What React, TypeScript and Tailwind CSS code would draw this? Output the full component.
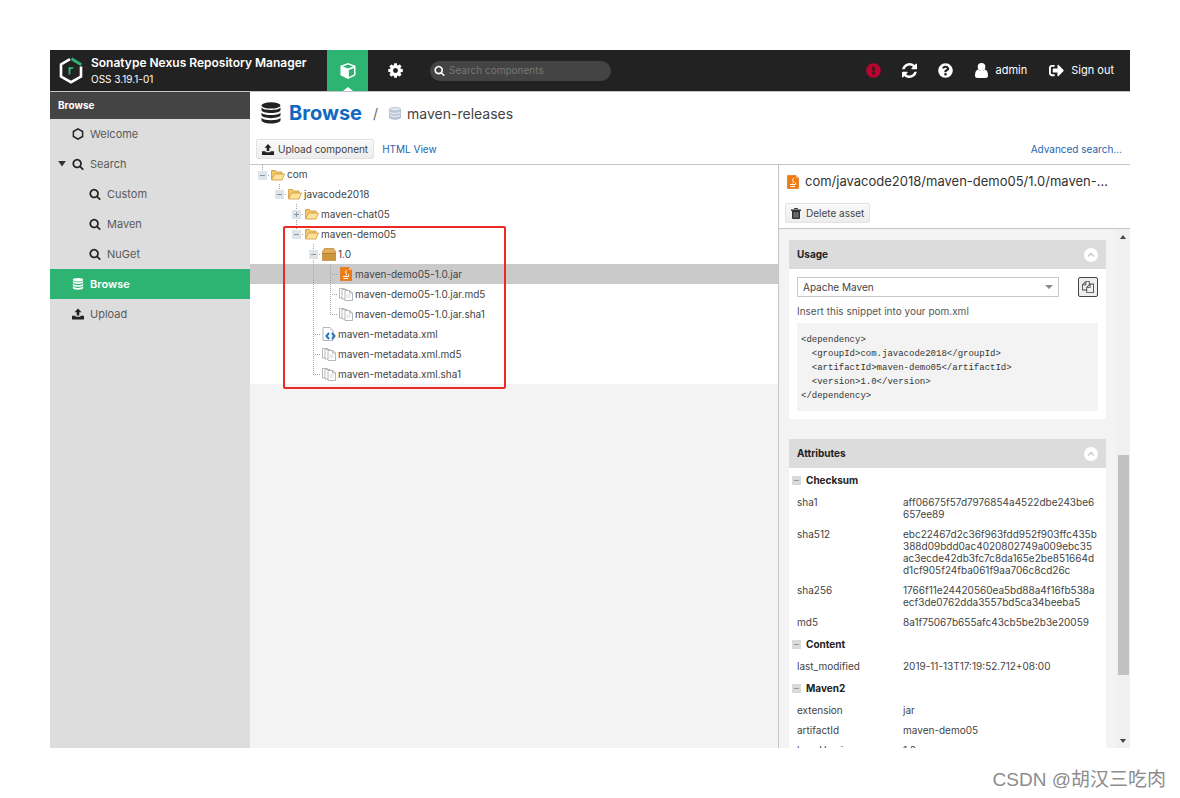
import React from "react";
import { FaExclamationCircle, FaQuestionCircle, FaSignOutAlt } from "react-icons/fa";

type IconProps = { className?: string };

function SearchIcon({ className }: IconProps) {
  return (
    <svg viewBox="0 0 1792 1792" fill="currentColor" className={className}>
      <path d="M1216 832q0-185-131.5-316.5t-316.5-131.5-316.5 131.5-131.5 316.5 131.5 316.5 316.5 131.5 316.5-131.5 131.5-316.5zm512 832q0 52-38 90t-90 38q-54 0-90-38l-343-342q-179 124-399 124-143 0-273.5-55.5t-225-150-150-225-55.5-273.5 55.5-273.5 150-225 225-150 273.5-55.5 273.5 55.5 225 150 150 225 55.5 273.5q0 220-124 399l343 343q37 37 37 90z" />
    </svg>
  );
}

function CubeIcon({ className }: IconProps) {
  return (
    <svg viewBox="0 0 16 16" className={className}>
      <path fill="#fff" d="M8 0 15.500 2.800V12.300L8 16 .5 12.300V2.800z" />
      <path fill="#2db473" d="M8 1.500 13.200 3.500 8 5.400 2.800 3.500zM8.900 7 14 5.100v6.400L8.900 14z" />
    </svg>
  );
}

function CogIcon({ className }: IconProps) {
  return (
    <svg viewBox="0 0 1792 1792" fill="currentColor" className={className}>
      <path d="M1152 896q0-106-75-181t-181-75-181 75-75 181 75 181 181 75 181-75 75-181zm512-109v222q0 12-8 23t-20 13l-185 28q-19 54-39 91 35 50 107 138 10 12 10 25t-9 23q-27 37-99 108t-94 71q-12 0-26-9l-138-108q-44 23-91 38-16 136-29 186-7 28-36 28h-222q-14 0-24.5-8.5t-11.5-21.5l-28-184q-49-16-90-37l-141 107q-10 9-25 9-14 0-25-11-126-114-165-168-7-10-7-23 0-12 8-23 15-21 51-66.5t54-70.5q-27-50-41-99l-183-27q-13-2-21-12.5t-8-23.5v-222q0-12 8-23t19-13l186-28q14-46 39-92-40-57-107-138-10-12-10-24 0-10 9-23 26-36 98.5-107.5t94.5-71.5q13 0 26 10l138 107q44-23 91-38 16-136 29-186 7-28 36-28h222q14 0 24.5 8.5t11.5 21.5l28 184q49 16 90 37l142-107q9-9 24-9 13 0 25 10 129 119 165 170 7 8 7 22 0 12-8 23-15 21-51 66.5t-54 70.5q26 50 41 98l183 28q13 2 21 12.5t8 23.5z" />
    </svg>
  );
}

function RefreshIcon({ className }: IconProps) {
  return (
    <svg viewBox="128 128 1536 1536" fill="currentColor" className={className}>
      <path d="M1639 1056q0 5-1 7-64 268-268 434.5t-478 166.5q-146 0-282.5-55t-243.5-157l-129 129q-19 19-45 19t-45-19-19-45v-448q0-26 19-45t45-19h448q26 0 45 19t19 45-19 45l-137 137q71 66 161 102t187 36q134 0 250-65t186-179q11-17 53-117 8-23 30-23h192q13 0 22.5 9.5t9.5 22.5zm25-800v448q0 26-19 45t-45 19h-448q-26 0-45-19t-19-45 19-45l138-138q-148-137-349-137-134 0-250 65t-186 179q-11 17-53 117-8 23-30 23h-199q-13 0-22.5-9.5t-9.5-22.5v-7q65-268 270-434.5t480-166.5q146 0 284 55.5t245 156.5l130-129q19-19 45-19t45 19 19 45z" />
    </svg>
  );
}

function UserIcon({ className }: IconProps) {
  return (
    <svg viewBox="0 0 13 15" fill="currentColor" className={className}>
      <ellipse cx="6.500" cy="4" rx="3.800" ry="4" />
      <path d="M3 6.500Q0 7.500 0 12.500 0 15 2.500 15h8q2.500 0 2.500-2.500 0-5-3-6-3.500 3-7 0z" />
    </svg>
  );
}

function FilesIcon({ className }: IconProps) {
  return (
    <svg viewBox="0 0 1792 1792" fill="currentColor" className={className}>
      <path d="M1696 384q40 0 68 28t28 68v1216q0 40-28 68t-68 28h-960q-40 0-68-28t-28-68v-288h-544q-40 0-68-28t-28-68v-672q0-40 20-88t48-76l408-408q28-28 76-48t88-20h416q40 0 68 28t28 68v328q68-40 128-40h416zm-544 213l-299 299h299v-299zm-640-384l-299 299h299v-299zm196 647l316-316v-416h-384v416q0 40-28 68t-68 28h-416v640h512v-256q0-40 20-88t48-76zm956 804v-1152h-384v416q0 40-28 68t-68 28h-416v640h896z" />
    </svg>
  );
}

function DatabaseIcon({ className }: IconProps) {
  return (
    <svg viewBox="0 0 20 22" fill="currentColor" className={className}>
      <ellipse cx="10" cy="3.4" rx="9.5" ry="3.2" />
      <path d="M.5 5.6C2 7.4 6 8 10 8s8-.6 9.500-2.400V8c0 1.800-4.300 3.100-9.500 3.100S.5 9.800.5 8z" />
      <path d="M.5 10.700C2 12.500 6 13.100 10 13.100s8-.6 9.500-2.400v2.400c0 1.800-4.300 3.100-9.500 3.100s-9.500-1.300-9.500-3.100z" />
      <path d="M.5 15.800C2 17.600 6 18.200 10 18.200s8-.6 9.500-2.400v2.500c0 1.900-4.300 3.200-9.500 3.200S.5 20.200.5 18.300z" />
    </svg>
  );
}

function UploadIcon({ className }: IconProps) {
  return (
    <svg viewBox="0 0 12 11" fill="currentColor" className={className}>
      <path d="M6 0 9.500 3.800H7.300V7H4.700V3.800H2.500z" />
      <path d="M0 7.200h3.600v1h4.800v-1H12V11H0z" />
    </svg>
  );
}

function HexIcon({ className }: IconProps) {
  return (
    <svg viewBox="0 0 12 13" fill="none" stroke="currentColor" strokeWidth="1.600" className={className}>
      <path d="M6 1 11 3.800v5.400L6 12 1 9.200V3.800z" />
    </svg>
  );
}

function TrashIcon({ className }: IconProps) {
  return (
    <svg viewBox="0 0 10 11" className={className}>
      <path fill="none" stroke="#333" d="M3.500 1.500v-1h3v1" />
      <path fill="#333" d="M0 1.500h10v1.500H0z" />
      <path fill="#333" d="M1 3h8v7q0 1-1 1H2q-1 0-1-1z" />
      <path stroke="#bbb" strokeWidth=".7" d="M3.200 4.200v5.500M5 4.200v5.500M6.800 4.200v5.500" />
    </svg>
  );
}

function Logo() {
  return (
    <svg viewBox="0 0 24 27" fill="none" className="h-[27px] w-6 shrink-0">
      <path stroke="#fff" strokeWidth="2.600" d="M11 2.200 2 7.400v12.200l10 5.600 10-5.600V9.500" />
      <path stroke="#2db473" strokeWidth="2.800" d="M12.500 1.800 22.300 7.700" />
      <path stroke="#2db473" strokeWidth="1.800" d="M10.500 17.500v-7.500M10.500 13q.5-2.300 3.800-2.100" />
    </svg>
  );
}

function FolderIcon() {
  return (
    <svg viewBox="0 0 14 12" className="h-3 w-3.5">
      <path fill="#f5c76b" stroke="#cf9838" strokeWidth=".8" d="M.5 10.500v-9h4l1 1.500h5.500V5" />
      <path fill="#fde39a" stroke="#cf9838" strokeWidth=".8" d="M.5 11 3.500 5h10L11 11z" />
    </svg>
  );
}

function BoxIcon() {
  return (
    <svg viewBox="0 0 14 13" className="h-[13px] w-3.5">
      <path fill="#e0ad5c" stroke="#b57d2c" strokeWidth=".7" d="M.5 5.500V3.500L2.500.5h9l2 3v9H.5z" />
      <path fill="#cf9640" d="M1 6h12v6H1z" />
      <path stroke="#a8701f" strokeWidth=".8" d="M.5 5.500h13" />
    </svg>
  );
}

function JarIcon() {
  return (
    <svg viewBox="0 0 12 14" className="h-3.5 w-3 shrink-0">
      <path fill="#ee7c12" stroke="#d9690a" strokeWidth=".6" d="M.5.5H9L11.500 3v10.500H.5z" />
      <path fill="#ffc98e" d="M9 .5V3h2.500z" />
      <path fill="none" stroke="#fff" d="M7 3Q4.500 4.500 6 6t-.5 2.500M3 9.500h5.500M3.500 11.500h4.500M8.500 7.500v2" />
    </svg>
  );
}

function CopyFileIcon() {
  return (
    <svg viewBox="0 0 14 13" className="h-[13px] w-3.5" fill="#fff" stroke="#a4a4a4" strokeWidth=".8">
      <path d="M.5.5h5l1 1V10h-6z" />
      <path d="M3 1.500h5l1 1V11H3z" />
      <path d="M6 2.500h4.500l3 2.500v7.500H6z" />
      <path fill="none" d="M10.500 2.500V5h3" />
      <path stroke="#ccc" d="M7.500 7h4M7.500 9h4" />
    </svg>
  );
}

function XmlIcon() {
  return (
    <svg viewBox="0 0 14 14" className="size-3.5">
      <path fill="#fff" stroke="#9aa5af" strokeWidth=".8" d="M1 .5h7L11 3.500v10H1z" />
      <path fill="#d5dde5" d="M8 .5v3h3z" />
      <path fill="none" stroke="#2176bd" strokeWidth="2" d="M7 6 4.500 9 7 12M10 6l2.500 3L10 12" />
    </svg>
  );
}

const fileIcons: Record<string, () => React.ReactElement> = {
  folder: FolderIcon,
  box: BoxIcon,
  jar: JarIcon,
  copy: CopyFileIcon,
  xml: XmlIcon,
};

// guides: "." blank, "|" line, "t" tee, "l" last child,
// "-" open last node, "=" open node with siblings, "+" closed node
const tree = [
  { guides: "-", icon: "folder", name: "com" },
  { guides: ".-", icon: "folder", name: "javacode2018" },
  { guides: "..+", icon: "folder", name: "maven-chat05" },
  { guides: "..-", icon: "folder", name: "maven-demo05" },
  { guides: "...=", icon: "box", name: "1.0" },
  { guides: "...|t", icon: "jar", name: "maven-demo05-1.0.jar", selected: true },
  { guides: "...|t", icon: "copy", name: "maven-demo05-1.0.jar.md5" },
  { guides: "...|l", icon: "copy", name: "maven-demo05-1.0.jar.sha1" },
  { guides: "...t", icon: "xml", name: "maven-metadata.xml" },
  { guides: "...t", icon: "copy", name: "maven-metadata.xml.md5" },
  { guides: "...l", icon: "copy", name: "maven-metadata.xml.sha1" },
];

function Guide({ kind }: { kind: string }) {
  const full = "|t=+".includes(kind);
  const node = "-=+".includes(kind);
  return (
    <svg viewBox="0 0 17 20" className="h-5 w-[17px] shrink-0" fill="none">
      {kind !== "." && (
        <path stroke="#a5a5a5" strokeDasharray="1 1" d={full ? "M8.500 0v20" : "M8.500 0v10.500"} />
      )}
      {kind !== "." && kind !== "|" && <path stroke="#a5a5a5" strokeDasharray="1 1" d="M8 10.500h8" />}
      {node && (
        <>
          <path fill="#dde4ea" d="M4 6h9v9H4z" />
          <path stroke="#8796a3" d={kind === "+" ? "M6 10.500h5M8.500 8v5" : "M6 10.500h5"} />
        </>
      )}
    </svg>
  );
}

const navItems = [
  { label: "Welcome", icon: HexIcon, pad: "pl-[22px]" },
  { label: "Search", icon: SearchIcon, pad: "pl-2", open: true },
  { label: "Custom", icon: SearchIcon, pad: "pl-[39px]" },
  { label: "Maven", icon: SearchIcon, pad: "pl-[39px]" },
  { label: "NuGet", icon: SearchIcon, pad: "pl-[39px]" },
  { label: "Browse", icon: DatabaseIcon, pad: "pl-[22px]", active: true },
  { label: "Upload", icon: UploadIcon, pad: "pl-[22px]" },
];

const attributes = [
  {
    group: "Checksum",
    rows: [
      { key: "sha1", lines: ["aff06675f57d7976854a4522dbe243be6", "657ee89"] },
      {
        key: "sha512",
        lines: [
          "ebc22467d2c36f963fdd952f903ffc435b",
          "388d09bdd0ac4020802749a009ebc35",
          "ac3ecde42db3fc7c8da165e2be851664d",
          "d1cf905f24fba061f9aa706c8cd26c",
        ],
      },
      { key: "sha256", lines: ["1766f11e24420560ea5bd88a4f16fb538a", "ecf3de0762dda3557bd5ca34beeba5"] },
      { key: "md5", lines: ["8a1f75067b655afc43cb5be2b3e20059"] },
    ],
  },
  { group: "Content", rows: [{ key: "last_modified", lines: ["2019-11-13T17:19:52.712+08:00"] }] },
  {
    group: "Maven2",
    rows: [
      { key: "extension", lines: ["jar"] },
      { key: "artifactId", lines: ["maven-demo05"] },
      { key: "baseVersion", lines: ["1.0"] },
    ],
  },
];

const snippet = `<dependency>
  <groupId>com.javacode2018</groupId>
  <artifactId>maven-demo05</artifactId>
  <version>1.0</version>
</dependency>`;

function Header() {
  return (
    <header className="flex h-[41px] shrink-0 items-center bg-[#222] text-[11px] text-white">
      <div className="flex w-[277px] shrink-0 items-center gap-2 pl-[9px]">
        <Logo />
        <div>
          <h1 className="text-[12px] leading-4 font-semibold whitespace-nowrap">Sonatype Nexus Repository Manager</h1>
          <p className="text-[10px] leading-4">OSS 3.19.1-01</p>
        </div>
      </div>
      <button aria-label="Browse" className="relative flex h-full w-[41px] items-center justify-center bg-[#2db473]">
        <CubeIcon className="size-4" />
        <svg viewBox="0 0 10 4" className="absolute bottom-0 h-1 w-2.5" fill="#fff">
          <path d="M0 4 5 0l5 4z" />
        </svg>
      </button>
      <button aria-label="Administration" className="flex h-full w-[54px] items-center justify-center">
        <CogIcon className="size-[17px]" />
      </button>
      <label className="ml-2 flex h-5 w-[181px] items-center gap-1 rounded-full bg-[#444] pl-1">
        <SearchIcon className="size-[11px]" />
        <input
          type="search"
          aria-label="Search components"
          placeholder="Search components"
          className="min-w-0 flex-1 bg-transparent text-[10px] outline-none placeholder:text-[#777]"
        />
      </label>
      <div className="ml-auto flex items-center pr-4">
        <button aria-label="System status" className="mr-[21px]">
          <FaExclamationCircle className="size-[15px] text-[#b8042f]" />
        </button>
        <button aria-label="Refresh" className="mr-[21px]">
          <RefreshIcon className="size-[15px]" />
        </button>
        <button aria-label="Help" className="mr-[22px]">
          <FaQuestionCircle className="size-[15px]" />
        </button>
        <button className="mr-[22px] flex items-center gap-2">
          <UserIcon className="h-[15px] w-[13px]" />
          admin
        </button>
        <button className="flex items-center gap-[7px]">
          <FaSignOutAlt className="size-[15px]" />
          Sign out
        </button>
      </div>
    </header>
  );
}

function Sidebar() {
  return (
    <nav className="w-[200px] shrink-0 bg-[#ddd]">
      <h2 className="flex h-[27px] items-center bg-[#444] pl-2 text-[10px] font-bold text-white">Browse</h2>
      <ul>
        {navItems.map(({ label, icon: Icon, pad, open, active }) => (
          <li key={label}>
            <a
              href="#"
              className={`flex h-[30px] items-center text-[11px] ${pad} ${
                active ? "bg-[#2db473] font-semibold text-white" : "text-[#5a5a5a]"
              }`}
            >
              {open && (
                <svg viewBox="0 0 9 7" className="mr-[6px] h-[6px] w-2" fill="#333">
                  <path d="M0 0h9L4.500 6.500z" />
                </svg>
              )}
              <Icon className={`mr-[6px] size-3 ${active ? "text-white" : "text-[#222]"}`} />
              {label}
            </a>
          </li>
        ))}
      </ul>
    </nav>
  );
}

function Tree() {
  return (
    <section className="relative min-w-0 flex-1 bg-[#f3f3f3]">
      <ul className="bg-white">
        {tree.map(({ guides, icon, name, selected }) => {
          const Icon = fileIcons[icon];
          return (
            <li
              key={name}
              className={`flex h-5 items-center pl-1 text-[10px] text-[#444] first:h-[19px] ${
                selected ? "bg-[#cacaca]" : ""
              }`}
            >
              {guides.split("").map((kind, i) => (
                <Guide key={i} kind={kind} />
              ))}
              <span className="mr-[2px] flex w-[14px] justify-center">
                <Icon />
              </span>
              {name}
            </li>
          );
        })}
      </ul>
      {/* Highlight around the maven-demo05 artifact */}
      <div className="absolute top-[61px] left-[33px] h-[163px] w-[223px] rounded-xs border-2 border-[#ea2a25]" />
    </section>
  );
}

function CardHeader({ title }: { title: string }) {
  return (
    <div className="flex h-[29px] items-center justify-between bg-[#dcdcdc] pr-2 pl-2">
      <h3 className="text-[10px] font-bold text-[#222]">{title}</h3>
      <button aria-label={`Collapse ${title}`} className="flex size-[14px] items-center justify-center rounded-full bg-white">
        <svg viewBox="0 0 8 5" className="h-[5px] w-2" fill="none" stroke="#ccc" strokeWidth="1.500">
          <path d="M1 4.500 4 1.500l3 3" />
        </svg>
      </button>
    </div>
  );
}

function AssetPanel() {
  return (
    <aside className="flex w-[352px] shrink-0 flex-col border-l border-[#c4c4c4] bg-white">
      <div className="flex h-[34px] shrink-0 items-center gap-[6px] px-2">
        <JarIcon />
        <h3 className="text-[13px] whitespace-nowrap text-[#333]">com/javacode2018/maven-demo05/1.0/maven-...</h3>
      </div>
      <div className="h-[30px] shrink-0 border-b border-[#c4c4c4] pt-1 pl-[6px]">
        <button className="flex h-5 items-center gap-[5px] rounded-xs border border-[#e2e2e2] bg-linear-to-b from-[#fafafa] to-[#ececec] px-[5px] text-[10px] text-[#444]">
          <TrashIcon className="h-[11px] w-[10px]" />
          Delete asset
        </button>
      </div>
      <div className="flex min-h-0 flex-1 bg-[#f3f3f3]">
        <div className="min-w-0 flex-1 overflow-hidden pt-[11px] pr-[10px] pl-[10px]">
          <div className="mb-5 bg-white">
            <CardHeader title="Usage" />
            <div className="px-2 pt-2 pb-2">
              <div className="flex h-5 items-center">
                <div className="relative w-[262px]">
                  <select
                    aria-label="Snippet format"
                    className="block h-5 w-full appearance-none border border-[#c8c8c8] bg-white pl-[5px] text-[10px] text-[#444]"
                  >
                    <option>Apache Maven</option>
                  </select>
                  <svg viewBox="0 0 8 4" className="absolute top-2 right-[6px] h-1 w-2" fill="#888">
                    <path d="M0 0h8L4 4z" />
                  </svg>
                </div>
                <button
                  aria-label="Copy snippet"
                  className="ml-auto flex size-5 items-center justify-center rounded-xs border border-[#444] bg-[#eee]"
                >
                  <FilesIcon className="size-3 text-[#444]" />
                </button>
              </div>
              <p className="mt-[6px] mb-1 text-[10px] leading-4 text-[#555]">Insert this snippet into your pom.xml</p>
              <pre className="bg-[#f3f3f3] px-1 pt-[10px] pb-2 font-['Liberation_Mono',monospace] text-[9px] leading-[14px] text-[#333]">
                {snippet}
              </pre>
            </div>
          </div>
          <div className="bg-white">
            <CardHeader title="Attributes" />
            <table className="w-full table-fixed text-left text-[10px] leading-3 text-[#444]">
              <colgroup>
                <col className="w-[114px]" />
                <col />
              </colgroup>
              {attributes.map(({ group, rows }) => (
                <tbody key={group}>
                  <tr>
                    <th colSpan={2} className="h-6 p-0">
                      <span className="flex items-center gap-[5px] pl-[3px] font-bold text-[#222]">
                        <svg viewBox="0 0 9 9" className="size-[9px]">
                          <path fill="#dadada" d="M0 0h9v9H0z" />
                          <path stroke="#999" d="M2 4.500h5" />
                        </svg>
                        {group}
                      </span>
                    </th>
                  </tr>
                  {rows.map(({ key, lines }) => (
                    <tr key={key}>
                      <td className="py-1 pl-2 align-top">{key}</td>
                      <td className="py-1 align-top whitespace-nowrap">
                        {lines.map((line) => (
                          <span key={line} className="block">
                            {line}
                          </span>
                        ))}
                      </td>
                    </tr>
                  ))}
                </tbody>
              ))}
            </table>
          </div>
        </div>
        {/* Scrollbar */}
        <div className="flex w-[14px] shrink-0 flex-col items-center bg-[#f0f0f0]">
          <svg viewBox="0 0 6 4" className="mt-1.5 h-1 w-1.5" fill="#444">
            <path d="M0 4h6L3 0z" />
          </svg>
          <div className="flex w-full flex-1 flex-col items-center py-[5px]">
            <div className="basis-[43%]" />
            <div className="w-[11px] basis-[45%] bg-[#c1c1c1]" />
          </div>
          <svg viewBox="0 0 6 4" className="mb-[5px] h-1 w-1.5" fill="#444">
            <path d="M0 0h6L3 4z" />
          </svg>
        </div>
      </div>
    </aside>
  );
}

export default function App() {
  return (
    <div className="relative flex h-screen flex-col bg-white p-[50px] font-[Inter,sans-serif]">
      <Header />
      <div className="flex min-h-0 flex-1 border-t border-[#c4c4c4]">
        <Sidebar />
        <main className="flex min-w-0 flex-1 flex-col">
          <div className="flex h-[42px] shrink-0 items-center pl-[11px]">
            <DatabaseIcon className="h-[22px] w-5 text-[#222]" />
            <h2 className="ml-2 text-[20px] font-bold text-[#1068c0]">Browse</h2>
            <span className="mx-[11px] text-[14px] text-[#666]">/</span>
            <svg viewBox="0 0 12 13" className="h-[13px] w-3">
              <path fill="#bcc9d8" stroke="#a0acba" strokeWidth=".6" d="M.5 2v9q5.500 3 11 0V2z" />
              <ellipse cx="6" cy="2.200" rx="5.500" ry="1.800" fill="#dfe7ef" stroke="#a0acba" strokeWidth=".6" />
              <path fill="none" stroke="#e9eef4" d="M.8 5.500q5.200 2.500 10.400 0M.8 8.500q5.200 2.500 10.400 0" />
            </svg>
            <span className="ml-[6px] text-[14px] text-[#444]">maven-releases</span>
          </div>
          <div className="flex h-[31px] shrink-0 items-center gap-2 border-b border-[#c4c4c4] pr-2 pl-[6px] text-[10px] text-[#2464ae]">
            <button className="flex h-5 items-center gap-1 rounded-xs border border-[#e2e2e2] bg-linear-to-b from-[#fafafa] to-[#ececec] px-[5px] text-[#444]">
              <UploadIcon className="h-[11px] w-3 text-[#222]" />
              Upload component
            </button>
            <a href="#">HTML View</a>
            <a href="#" className="ml-auto">
              Advanced search...
            </a>
          </div>
          <div className="flex min-h-0 flex-1">
            <Tree />
            <AssetPanel />
          </div>
        </main>
      </div>
      <p className="absolute right-[14px] bottom-1 font-['Liberation_Sans','Noto_Sans_CJK_SC',sans-serif] text-[19px] leading-7 text-[#8c8c8c]">
        CSDN @胡汉三吃肉
      </p>
    </div>
  );
}
